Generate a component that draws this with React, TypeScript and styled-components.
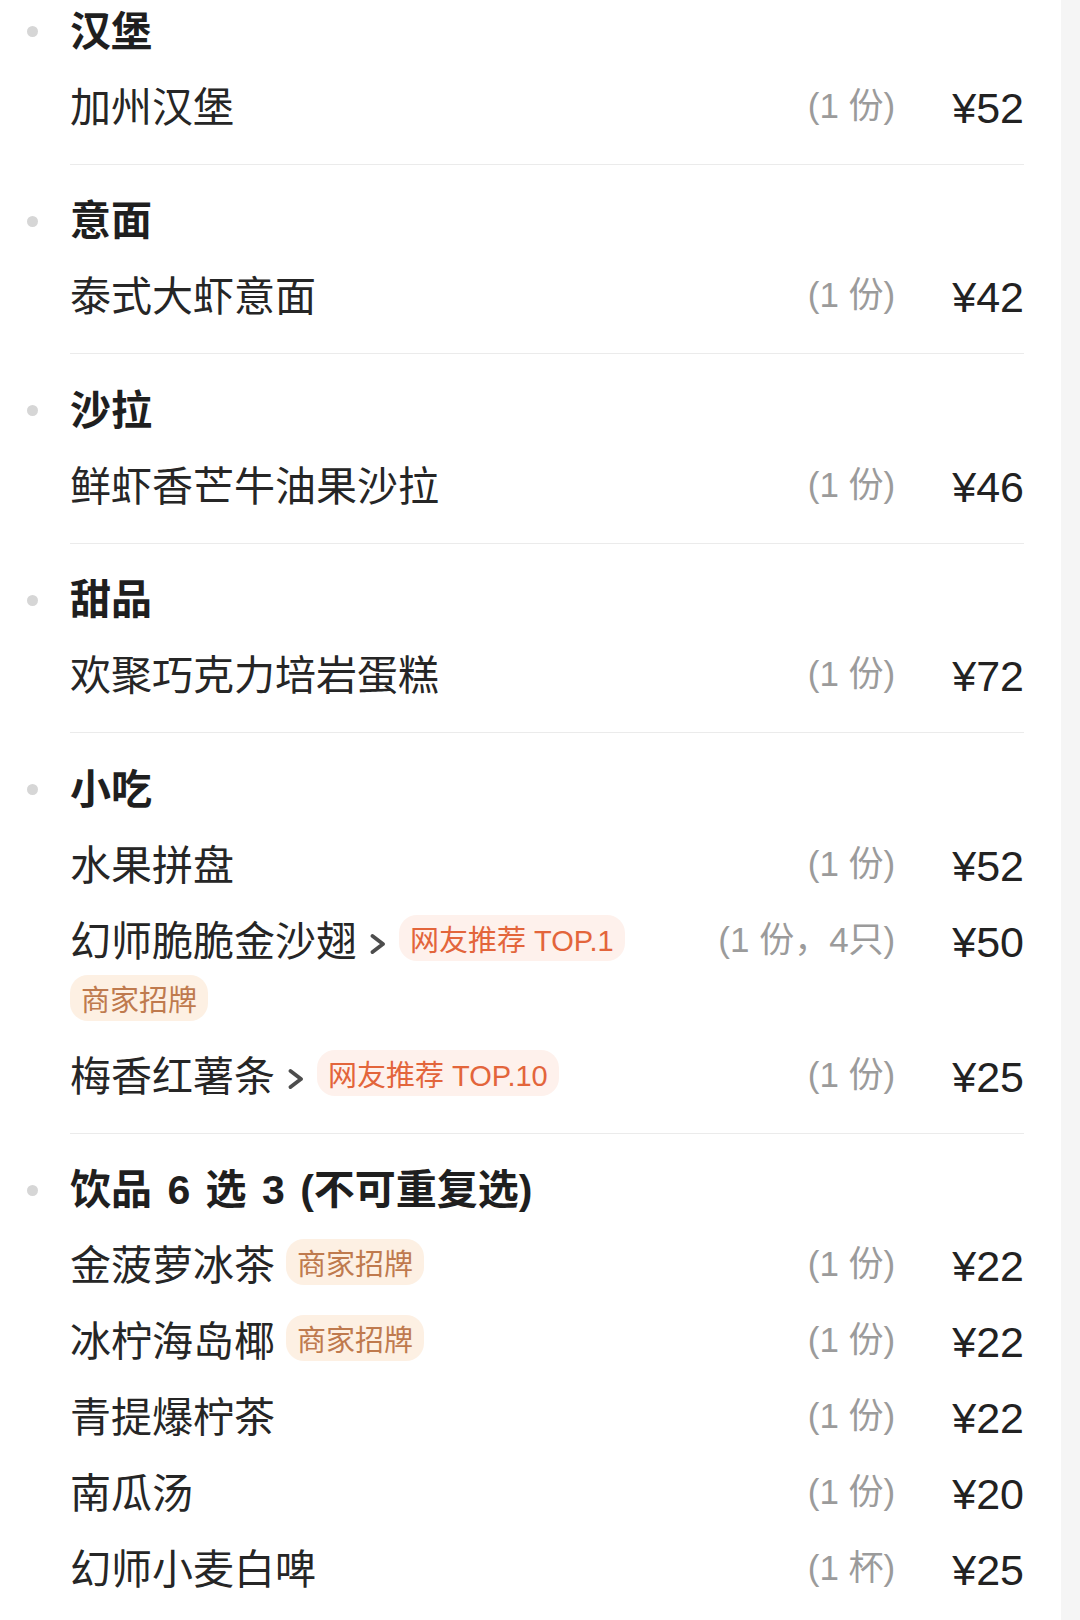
import React from "react";
import styled, { createGlobalStyle } from "styled-components";

const GlobalStyle = createGlobalStyle`
  html, body {
    margin: 0;
    padding: 0;
    background: #ffffff;
  }
  body {
    font-family: "Liberation Sans", "Noto Sans CJK SC", sans-serif;
    -webkit-font-smoothing: antialiased;
  }
  * {
    box-sizing: border-box;
  }
`;

const Page = styled.div`
  display: flex;
  min-height: 100vh;
  overflow: hidden;
  background: #ffffff;
`;

const List = styled.div`
  flex: 1;
  min-width: 0;
  margin-top: -25px;
  padding-right: 37px;
`;

const SideStrip = styled.div`
  width: 19px;
  flex-shrink: 0;
  background: #f5f5f5;
`;

const Section = styled.section`
  display: grid;
  grid-template-columns: 70px 1fr;
  padding-top: 18.5px;
`;

const DotCell = styled.div`
  height: 76px;
  display: flex;
  align-items: center;
  padding-left: 26.5px;
`;

const Dot = styled.span`
  width: 11px;
  height: 11px;
  border-radius: 50%;
  background: #d6d6d6;
`;

const Body = styled.div`
  min-width: 0;
  padding-bottom: 18px;
  border-bottom: 1px solid #ebebeb;
`;

const Title = styled.h3`
  margin: 0;
  height: 76px;
  line-height: 76px;
  font-size: 41px;
  font-weight: 700;
  color: #1f1f1f;
  word-spacing: 4px;
  white-space: nowrap;
`;

const ItemRow = styled.div`
  display: flex;
  align-items: flex-start;
  padding: 10px 0;
`;

const NameBlock = styled.div`
  flex: 1;
  min-width: 0;
  display: flex;
  flex-wrap: wrap;
  align-items: center;
  column-gap: 11px;
  row-gap: 5px;
`;

const Name = styled.span`
  font-size: 41px;
  line-height: 56px;
  color: #262626;
  white-space: nowrap;
`;

const Arrow = styled.svg`
  width: 16px;
  height: 22px;
  margin: 4px 2px 0;
  flex-shrink: 0;
`;

const Tag = styled.span<{ $tone: "hot" | "brand" }>`
  display: inline-flex;
  align-items: center;
  height: 46px;
  padding: 0 11px;
  margin-bottom: 8px;
  border-radius: 18px;
  font-size: 29px;
  white-space: nowrap;
  color: ${(p) => (p.$tone === "hot" ? "#e3653b" : "#bf7a4e")};
  background: ${(p) => (p.$tone === "hot" ? "#fef1ec" : "#fdf0e3")};
`;

const Qty = styled.span`
  margin-left: 24px;
  font-size: 35px;
  line-height: 52px;
  color: #9b9b9b;
  white-space: nowrap;
`;

const Price = styled.span`
  margin-left: 57px;
  font-size: 43px;
  line-height: 56px;
  color: #222222;
  white-space: nowrap;
`;

type TagT = { text: string; tone: "hot" | "brand" };
type Item = { name: string; arrow?: boolean; tags?: TagT[]; qty: string; price: string };
type Group = { title: string; items: Item[] };

const hot = (text: string): TagT => ({ text, tone: "hot" });
const brand: TagT = { text: "商家招牌", tone: "brand" };

const groups: Group[] = [
  { title: "汉堡", items: [{ name: "加州汉堡", qty: "(1 份)", price: "¥52" }] },
  { title: "意面", items: [{ name: "泰式大虾意面", qty: "(1 份)", price: "¥42" }] },
  { title: "沙拉", items: [{ name: "鲜虾香芒牛油果沙拉", qty: "(1 份)", price: "¥46" }] },
  { title: "甜品", items: [{ name: "欢聚巧克力培岩蛋糕", qty: "(1 份)", price: "¥72" }] },
  {
    title: "小吃",
    items: [
      { name: "水果拼盘", qty: "(1 份)", price: "¥52" },
      {
        name: "幻师脆脆金沙翅",
        arrow: true,
        tags: [hot("网友推荐 TOP.1"), brand],
        qty: "(1 份，4只)",
        price: "¥50",
      },
      { name: "梅香红薯条", arrow: true, tags: [hot("网友推荐 TOP.10")], qty: "(1 份)", price: "¥25" },
    ],
  },
  {
    title: "饮品 6 选 3 (不可重复选)",
    items: [
      { name: "金菠萝冰茶", tags: [brand], qty: "(1 份)", price: "¥22" },
      { name: "冰柠海岛椰", tags: [brand], qty: "(1 份)", price: "¥22" },
      { name: "青提爆柠茶", qty: "(1 份)", price: "¥22" },
      { name: "南瓜汤", qty: "(1 份)", price: "¥20" },
      { name: "幻师小麦白啤", qty: "(1 杯)", price: "¥25" },
    ],
  },
];

const Chevron = () => (
  <Arrow viewBox="0 0 16 22" aria-hidden="true">
    <polyline
      points="2.5,3 13,11 2.5,19"
      fill="none"
      stroke="#4d4d4d"
      strokeWidth="3.8"
      strokeLinecap="round"
      strokeLinejoin="round"
    />
  </Arrow>
);

export default function App() {
  return (
    <>
      <GlobalStyle />
      <Page>
        <List>
          {groups.map((g) => (
            <Section key={g.title}>
              <DotCell>
                <Dot />
              </DotCell>
              <Body>
                <Title>{g.title}</Title>
                {g.items.map((it) => (
                  <ItemRow key={it.name}>
                    <NameBlock>
                      <Name>{it.name}</Name>
                      {it.arrow && <Chevron />}
                      {it.tags?.map((t) => (
                        <Tag key={t.text} $tone={t.tone}>
                          {t.text}
                        </Tag>
                      ))}
                    </NameBlock>
                    <Qty>{it.qty}</Qty>
                    <Price>{it.price}</Price>
                  </ItemRow>
                ))}
              </Body>
            </Section>
          ))}
        </List>
        <SideStrip />
      </Page>
    </>
  );
}
